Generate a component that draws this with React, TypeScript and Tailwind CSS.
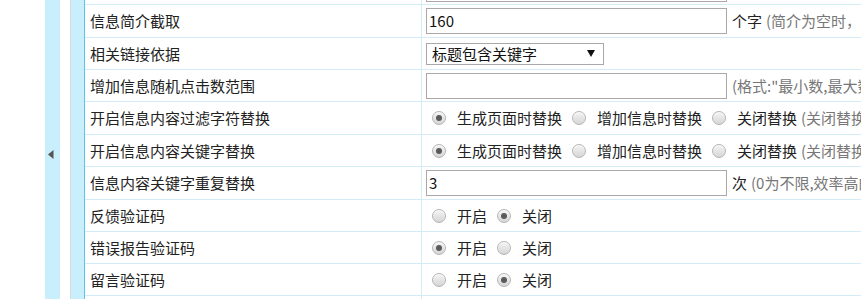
import React from "react";

const font = { fontFamily: '"Noto Sans CJK SC", "Noto Sans", sans-serif' };

function Radio({ checked }: { checked?: boolean }) {
  return (
    <span className="flex h-[14px] w-[14px] shrink-0 items-center justify-center rounded-full border border-[#b4b4b4] bg-gradient-to-b from-[#f4f4f4] to-[#d6d6d6] shadow-[inset_0_1px_1px_rgba(255,255,255,0.8)]">
      {checked && <span className="h-[6px] w-[6px] rounded-full bg-[#5a5a5a]" />}
    </span>
  );
}

function RadioGroup({ items, note }: { items: { label: string; checked?: boolean }[]; note?: string }) {
  return (
    <div className="flex items-center whitespace-nowrap pl-[10px]">
      {items.map((it, i) => (
        <div key={i} className="mr-[10px] flex items-center">
          <Radio checked={it.checked} />
          <span className="ml-[11px] text-[#222]">{it.label}</span>
        </div>
      ))}
      {note && <span className="-ml-[6px] text-[#777]">{note}</span>}
    </div>
  );
}

function TextBox({ value, unit, note }: { value?: string; unit?: string; note?: string }) {
  return (
    <div className="flex items-center whitespace-nowrap pl-[4px]">
      <div className="flex h-[26px] w-[301px] shrink-0 items-center border border-[#a9a9a9] px-[2px] text-[#111]">
        {value}
      </div>
      <span className="ml-[5px] text-[#222]">{unit}</span>
      {note && <span className={unit ? "ml-[4px] text-[#777]" : "text-[#777]"}>{note}</span>}
    </div>
  );
}

function Row({ label, h, children }: { label?: string; h: string; children?: React.ReactNode }) {
  return (
    <div className={`flex shrink-0 border-b border-[#d3ecf8] ${h}`}>
      <div className="flex w-[337px] shrink-0 items-center border-r border-[#d3ecf8] pl-[5px] text-[#222]">
        {label}
      </div>
      <div className="flex min-w-0 flex-1 items-center overflow-hidden">{children}</div>
    </div>
  );
}

export default function App() {
  const onOff = (on: boolean) => [
    { label: "开启", checked: on },
    { label: "关闭", checked: !on },
  ];
  const replace = [
    { label: "生成页面时替换", checked: true },
    { label: "增加信息时替换" },
    { label: "关闭替换" },
  ];

  return (
    <div className="flex h-[299px] w-[861px] overflow-hidden bg-white text-[15px] leading-[20px]" style={font}>
      <div className="w-[45px] shrink-0" />
      <div className="flex w-[15px] shrink-0 items-start bg-[#c9effd] pl-[3px] pt-[150px]">
        <svg width="6" height="9" viewBox="0 0 6 9">
          <polygon points="5.5,0 5.5,9 0,4.5" fill="#555" />
        </svg>
      </div>
      <div className="w-[11px] shrink-0 border-r border-[#dadada]" />
      <div className="w-[14px] shrink-0 border-r border-[#5cc3ef] bg-[#c9effd]" />
      <div className="flex min-w-0 flex-1 flex-col overflow-hidden">
        <div className="flex h-[5px] shrink-0 border-b border-[#d3ecf8]">
          <div className="w-[337px] shrink-0 border-r border-[#d3ecf8]" />
          <div className="pl-[4px]">
            <div className="h-[2px] w-[301px] border-x border-b border-[#a9a9a9]" />
          </div>
        </div>
        <Row label="信息简介截取" h="h-[33px]">
          <TextBox value="160" unit="个字" note="(简介为空时，截取信息内容的字数)" />
        </Row>
        <Row label="相关链接依据" h="h-[32px]">
          <div className="pl-[4px]">
            <div className="flex h-[22px] w-[178px] items-center justify-between border border-[#a9a9a9] pl-[5px] pr-[8px] text-[#111]">
              <span>标题包含关键字</span>
              <svg width="8" height="7" viewBox="0 0 8 7">
                <polygon points="0,0 8,0 4,7" fill="#111" />
              </svg>
            </div>
          </div>
        </Row>
        <Row label="增加信息随机点击数范围" h="h-[32px]">
          <TextBox note={'(格式:"最小数,最大数")'} />
        </Row>
        <Row label="开启信息内容过滤字符替换" h="h-[33px]">
          <RadioGroup items={replace} note="(关闭替换可以提高效率)" />
        </Row>
        <Row label="开启信息内容关键字替换" h="h-[32px]">
          <RadioGroup items={replace} note="(关闭替换可以提高效率)" />
        </Row>
        <Row label="信息内容关键字重复替换" h="h-[33px]">
          <TextBox value="3" unit="次" note="(0为不限,效率高的为1)" />
        </Row>
        <Row label="反馈验证码" h="h-[32px]">
          <RadioGroup items={onOff(false)} />
        </Row>
        <Row label="错误报告验证码" h="h-[32px]">
          <RadioGroup items={onOff(true)} />
        </Row>
        <Row label="留言验证码" h="h-[32px]">
          <RadioGroup items={onOff(false)} />
        </Row>
        <Row h="h-[20px]" />
      </div>
    </div>
  );
}
